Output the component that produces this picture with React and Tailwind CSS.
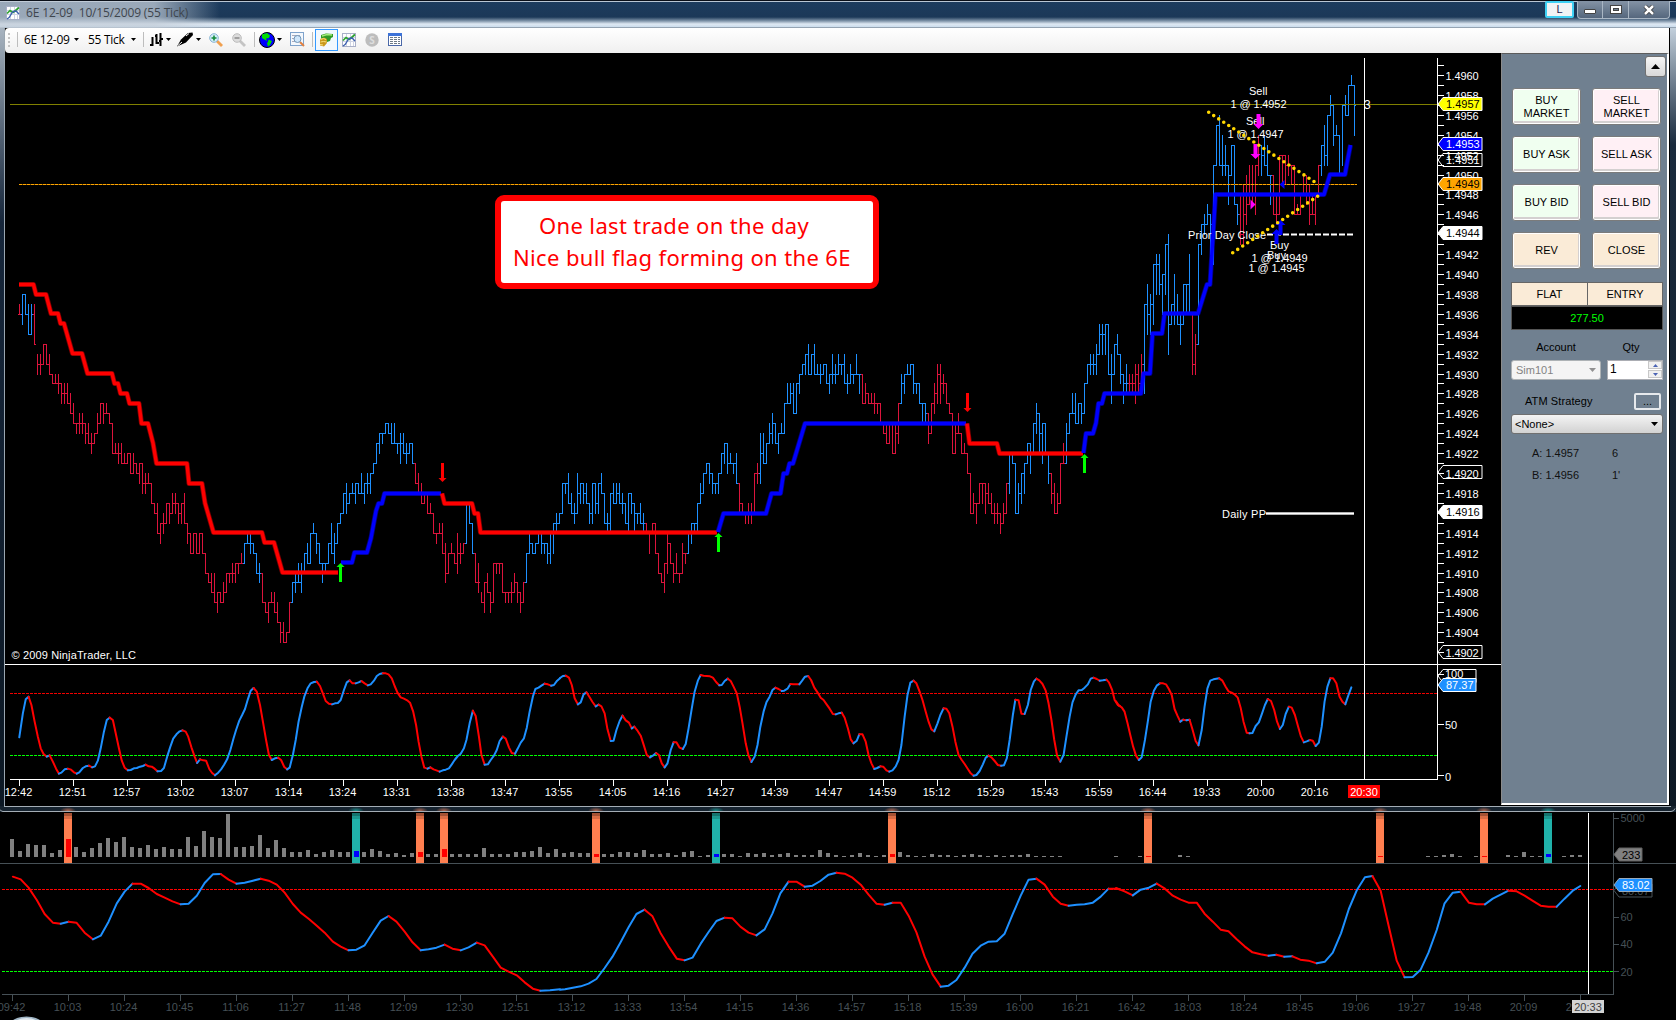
const BLUE = '#1e90ff';
const CRIMSON = '#dc143c';

// one token per bar: high, low, close in ticks above 1.4900, two digits each
const BARS = [
  ['r', '373636'],
  ['b', '383538 383636 373434 373436'],
  ['r', '373333 323031 323031 333133 333131 323030 302929 302929 302829 292728 292728 292727 282626 272525 252425 262425 262425 252324 252323 242223 242324 262425 272527 272526 272626 262525 252222 232222 232122 232121 222121 222122 222020 222021 212020 211921 211819 201819 201919 191717 171616 171414 151315 161415 171517 171516 181617 181617 171516 171517 181515 151314 141212 141214 141212 141214 141212 121010 100909 100808 100707 080608 080707 090708 100810 100910 110910 110911 111011 121111'],
  ['b', '131113 141313 141213 131212 121010 110910'],
  ['r', '100707 070606 070507 080707 080606 070505 050304 050303 040304 070407'],
  ['b', '090709 100809 110909 110810 121012 131111 141114 151414 141213 131111 110911 111011 131113 151212 141113 151315 161516 181618 191617 181718 191818 191719 191818 201818 191719 201819 201820 212021 232123 242224 242324 252425 252424 252323 252323 232223 242123 242222 232122 232223 232121'],
  ['r', '211919 201818 191717 181718 181616 171616 161414 141314 151414 151212 130910 121012 131212 121111 141012 131112 131213'],
  ['b', '171317 171515 151212'],
  ['r', '120909 110809 080707 090609 100808 080607 110711 111011 111011 110808 080708 080708 090708 100809 090708 080607 090709'],
  ['b', '120912 141213 131212 131213 141314 141213 131213 131112 141114 151215 161415 161516 191619 191819 201717 181616 171516 201618 191719 191718 191717 171516 191519 191617 191619 201818 181515 161415 181418 191717 191718 191717 181617 171515 181418 181617 171416 161516 171515 161415'],
  ['r', '151414 141214 151415 151212 121010 100909 110811 141013 131111 110910 121010 100910 131012 121112'],
  ['b', '141214 151315 151415 171417 191718 201820 212021 211920 201819 191819 201820 222022 232123 232021 222121 212021 221919'],
  ['r', '191617 171616 161516 171516 171516 201620 211920'],
  ['b', '241922 242121 232123 252324 262325 252323 242224 252424 272427 292727 292728 292626 292629 302830 313031 323032 333030 323032 333030 313030 312930 313031 312929 302830 322930 312930 323031 313031 322929 302829 312930 302930 323030 302830'],
  ['r', '302727 292728 282727 282727 282627 272627 272525 252424 252323 252325 252222 252224 272327'],
  ['b', '302729 302830 313030 313031 312829 292829 292727 272527 272526'],
  ['r', '262324 272427 292628 312730 312729 302829 292727 272626 262222 252224 262424 242222 232222 222020 201616 181617 171517 191719 191719 191618 191717 181616 171516 171516 161415 171516 191619'],
  ['b', '221822 222121 211616 191618 201720 211821 232123 232022 252225 272426 262224 252125 252222 221920'],
  ['r', '201718 191616 181617 211721 232121'],
  ['b', '252124 262426 282626 282525 272527 272526 292629 312931 323031 323031 333032 353234 353234 353235 353030 322730 333033 343232 322930 302729 312829'],
  ['r', '302829 302829 312730 312829 322831'],
  ['b', '372837 393436 383437 413541 423841 423839 403640 433843 443235 373537 403536 383535 363335 393539 393639 423636'],
  ['r', '363031 343033'],
  ['b', '433343 454245 464445 474546 464245 514151 555155 565151 545051 535051 514750 535053 534747 474546'],
  ['r', '484344 494346 504547 514749 514749 514651 545053'],
  ['b', '535052 545151 535050 504750'],
  ['r', '504646 484546 524652 524952 524951 525051 514951 514646 474646 484648 504850 504748 494546 484646 484548 514851'],
  ['b', '535053 555152 565156 585657 575354 555454 545050 575157 585656 595659 605959 595457'],
];

const priceY = (p) => Math.round(75 + (60 - p) * 9.95) + 0.5;

function barPaths() {
  const out = [];
  let x = 19;
  let prev = null;
  for (const [color, tokens] of BARS) {
    let d = '';
    for (const t of tokens.split(' ')) {
      const h = +t.slice(0, 2);
      const l = +t.slice(2, 4);
      const c = +t.slice(4, 6);
      d += `M${x + 0.5} ${priceY(h) - 0.5}V${priceY(l) + 0.5}`;
      const o = prev === null ? c : prev;
      if (o >= l && o <= h) d += `M${x - 1} ${priceY(o)}h1`;
      d += `M${x + 1} ${priceY(c)}h1`;
      prev = c;
      x += 3;
    }
    out.push({ d, color: color === 'r' ? CRIMSON : BLUE });
  }
  return out;
}

const TREND = [
  ['#ff0000', '19,284.5 33.5,284.5 36,294.5 46,294.5 51,313.5 58,313.5 60.5,323.5 64,323.5 72.5,353.5 82,353.5 87.5,373.5 112,373.5 114.5,383.5 118,383.5 120.5,393.5 127,393.5 129.5,403.5 139,403.5 141.5,423.5 148,423.5 153,443 156.5,463.5 187,463.5 189,483.5 202,483.5 205,503 213.5,532.5 262,532.5 264.5,542.5 274,542.5 282.5,572.5 338,572.5'],
  ['#0000ff', '341,562.5 352,562.5 354.5,552.5 367,552.5 371,538 376,511 378.5,503.5 382,503.5 384.5,493.5 441,493.5'],
  ['#ff0000', '442,493.5 444.5,503.5 472,503.5 474.5,513.5 478,513.5 480.5,532.5 717,532.5'],
  ['#0000ff', '718,532 723.5,513.5 766,513.5 771.5,493.5 780.5,493.5 783.5,473.5 787,473.5 789.5,463.5 793,463.5 805,423.5 966,423.5'],
  ['#ff0000', '967,423.5 969.5,443.5 997,443.5 999.5,453.5 1083,453.5'],
  ['#0000ff', '1083.5,453 1086,433.5 1093,433.5 1096,423 1098.5,403.5 1102,403.5 1104.5,393.5 1141,393.5 1143.5,373.5 1150,373.5 1152.5,333.5 1162,333.5 1164.5,313.5 1198,313.5 1207,284.5 1210,284.5 1215.5,194.5 1324,194.5 1330,174.5 1345,174.5 1348,158 1350.5,145'],
];

// oscillator samples, in chunks that start at the given x
const STOCH_TOP = [
  [0, '54,292 64,220 72,178 80,170 88,195 97,245 106,290 114,325 122,342 131,350 139,346 148,365 157,386 165,401 172,398 181,388 190,386 199,389 207,397 215,401 222,397 232,384 240,379 249,377 258,382 266,379 274,362 282,325 291,275 299,240 307,233 316,240 324,280 333,325 341,362 349,383 358,391 366,390 375,385 383,384 392,380 400,378 408,374 416,379 425,380 433,386 441,394 451,393 459,384 468,350 477,320 485,296 494,283 503,274 511,271 520,275 527,290 536,322 545,350 552,369 560,358 569,361 577,362 586,387 594,399 602,406 611,398 619,388 627,375 636,358 645,330 654,295 661,270 670,242 678,225 686,207 694,178 702,152 710,144 719,155 728,195 737,250 745,300 753,345 761,360 770,355 779,353 787,360 796,381 804,388 811,383 820,345 828,300 836,245 845,200 852,170 861,145 870,130 879,126 887,125 896,138 904,160 912,183 921,191 930,193 938,190 946,189 954,180 963,150 971,127 979,121 987,130 996,130 1004,127 1012,123 1021,130 1030,136 1038,133 1047,122 1055,108 1063,102 1072,100 1080,100 1088,103 1097,115 1105,138 1113,158 1122,172 1131,176 1140,181 1148,188 1157,215 1165,255 1172,305 1180,350 1188,383 1197,386 1205,382 1214,388 1222,391 1231,395 1240,391 1248,389 1257,385 1265,373 1273,360 1282,348 1290,341 1299,325 1306,300 1315,250 1324,212 1332,228 1341,290 1348,345 1357,374 1366,373 1374,360 1383,347 1391,330 1399,303 1408,290 1416,296 1425,322 1433,339 1442,341 1450,325 1458,308 1467,295 1475,263 1483,215 1492,170 1499,147 1508,143 1517,136 1525,131 1534,133 1543,137 1551,135 1560,122 1568,115'],
  [560, '0,114 8,108 16,107 25,113 33,135 41,175 50,193 58,187 66,163 74,157 83,172 91,186 100,199 108,194 116,199 125,220 133,268 142,303 150,302 158,270 167,243 175,227 184,241 193,248 201,265 208,260 217,272 226,287 235,317 243,345 252,352 260,347 269,339 277,345 285,370 293,382 301,370 310,330 318,307 326,307 335,323 344,327 352,312 360,265 369,205 377,155 386,122 394,105 402,107 420,109 428,113 437,126 446,136 453,135 461,123 470,116 478,123 486,140 495,160 503,200 511,250 520,310 528,347 536,366 545,350 553,315 561,260 570,215 578,187 587,170 595,150 603,143 612,147 621,153 628,152 637,146 645,132 653,133 670,133 678,122 686,110 695,108 703,120 712,143 721,157 730,173 738,180 747,194 755,206 764,222 772,223 780,220 789,218 797,233 806,265 814,298 822,310 831,302 838,283 847,283 856,305 864,345 872,370 880,387 888,384 897,379 905,380 914,391 922,395 931,391 940,379 948,360 956,315 965,230 973,165 981,128 990,122 998,130 1007,155 1015,180 1024,215 1032,245 1040,268 1048,274 1057,250 1065,225 1074,205 1082,206 1090,220 1099,260 1107,305 1116,345 1125,360 1133,372 1142,387 1150,400 1158,407 1166,405 1175,393 1184,373 1192,353 1200,347 1208,352 1217,363 1226,375 1235,377 1243,376 1251,355 1259,300 1268,225 1275,179 1284,181 1292,221 1301,222 1310,195 1318,150 1327,124 1334,116 1342,121 1351,132 1360,152 1368,190 1376,240 1384,300 1392,348 1401,365 1410,345 1418,290 1427,230 1435,187 1444,163 1452,151 1461,150 1469,143 1478,133 1486,116 1494,113 1503,117 1511,122 1520,121 1530,119 1537,127 1546,150 1553,180 1562,195 1568,198'],
  [1116, '0,184 8,197 16,202 24,215 32,248 40,285 48,320 56,347 64,360 72,352 81,300 89,245 97,185 106,152 114,137 123,130 132,130 140,133 148,147 156,165 164,207 172,227 180,245 188,239 197,241 206,239 214,268 223,303 231,316 240,270 248,200 256,145 264,122 273,118 289,115 298,122 307,140 315,154 324,158 332,163 341,173 349,203 357,245 366,278 374,280 382,279 391,258 400,247 409,220 417,195 425,177 434,183 443,210 451,245 459,267 467,255 475,222 484,200 492,203 501,225 510,260 518,290 526,307 534,304 543,300 551,302 559,318 568,308 576,260 584,185 592,140 600,115 608,115 617,130 626,170 634,185 642,193 651,165 659,142'],
];

const STOCH_BOTTOM = [
  [0, '36,710 58,718 80,743 103,780 125,822 148,848 170,851 192,845 214,848 237,878 260,898 282,887 304,845 327,790 349,755 371,731 394,731 416,744 439,762 461,773 483,784 506,793 528,791 551,767 573,729 596,703 618,702 640,719 662,731 685,728 708,722 730,716 752,722 775,734 797,758 820,792 842,818 865,837 887,857 909,878 932,905 954,920 976,931 998,929 1021,916 1043,879 1066,842 1088,828 1110,845 1133,875 1155,907 1178,931 1200,928 1222,923 1245,914 1267,926 1290,931 1312,922 1335,908 1357,916 1380,950 1402,983 1424,995 1447,1006 1469,1027 1492,1046 1513,1052 1540,1051 1568,1048'],
  [560, '0,1049 14,1048 36,1043 58,1039 80,1031 102,1017 125,984 147,950 170,906 192,862 214,822 237,809 259,829 281,878 304,919 327,956 349,961 371,953 394,911 416,876 438,843 461,833 483,835 505,860 528,878 550,886 573,868 595,820 617,760 640,725 662,725 685,740 707,737 729,723 752,704 774,698 797,701 819,713 842,734 864,764 886,791 909,794 931,788 954,788 976,827 998,877 1021,950 1043,1003 1066,1040 1088,1037 1110,1020 1133,983 1155,941 1178,917 1200,905 1223,904 1245,881 1267,824 1290,767 1312,719 1334,716 1357,734 1380,770 1402,791 1424,797 1447,794 1469,793 1492,788 1514,770 1536,746 1558,746 1568,748'],
  [1116, '0,744 24,754 47,766 69,749 92,743 114,731 137,746 159,767 181,779 203,788 226,788 248,821 271,845 293,869 315,874 338,898 360,919 382,937 405,943 427,947 449,944 471,950 494,949 516,959 539,962 562,970 585,965 607,938 630,880 652,807 675,749 697,712 718,708 741,752 764,860 786,962 808,1012 831,1011 853,989 875,938 898,870 920,790 943,758 965,755 988,788 1010,793 1033,793 1055,776 1077,764 1099,752 1122,754 1144,767 1166,782 1189,797 1211,800 1234,800 1256,776 1279,752 1300,738'],
];

// split an oscillator into runs: blue while rising, red otherwise
function runs(chunks) {
  const out = [];
  for (const [x0, s] of chunks) {
    const pts = s.split(' ').map((p) => {
      const [x, y] = p.split(',').map(Number);
      return [x0 + x / 2.8, 640 + y / 3];
    });
    for (let i = 1; i < pts.length; i++) {
      const color = pts[i][1] < pts[i - 1][1] ? BLUE : '#ff0000';
      const last = out[out.length - 1];
      if (last && last.color === color && last.x0 === x0) {
        last.points.push(pts[i]);
      } else {
        out.push({ color, x0, points: [pts[i - 1], pts[i]] });
      }
    }
  }
  return out;
}

const VOLUME = [
  18, 6, 13, 12, 12, 4, 7, 18, 10, 5, 9, 14, 19, 15, 20, 10, 9, 12, 8, 10, 8, 8, 20, 11, 26, 20, 19, 43, 10, 10, 11, 22,
  9, 17, 9, 5, 5, 7, 3, 5, 7, 5, 5, 6, 5, 8, 6, 3, 4, 2, 4, 5, 3, 3, 8, 3, 3, 3, 3, 9, 3, 3, 3, 5, 5, 6, 10, 4, 8,
  4, 5, 4, 4, 3, 3, 3, 5, 5, 4, 7, 3, 3, 4, 2, 5, 6, 1, 2, 3, 3, 3, 1, 4, 3, 4, 2, 3, 4, 2, 2, 2, 7, 4, 2, 1, 2, 4,
  2, 1, 2, 3, 5, 2, 1, 1, 3, 2, 2, 1, 2, 3, 2, 1, 2, 1, 2, 2, 3, 1, 1, 1, 1,
];
const VOLUME_LATE = {
  138: 1, 141: 1, 142: 1, 146: 2, 147: 1, 171: 1, 177: 1, 178: 1, 179: 2, 180: 3, 181: 1, 183: 1, 184: 1, 187: 2,
  188: 1, 189: 5, 190: 1, 191: 1, 192: 3, 194: 1, 195: 2, 196: 2,
};
const SIGNALS = { 7: 'sell', 43: 'buy', 51: 'sell', 54: 'sell', 73: 'sell', 88: 'buy', 110: 'sell', 142: 'sell', 171: 'sell', 184: 'sell', 192: 'buy' };

const TOP_TIMES = '12:42 12:51 12:57 13:02 13:07 13:14 13:24 13:31 13:38 13:47 13:55 14:05 14:16 14:27 14:39 14:47 14:59 15:12 15:29 15:43 15:59 16:44 19:33 20:00 20:16'.split(' ');
const BOTTOM_TIMES = '09:42 10:03 10:24 10:45 11:06 11:27 11:48 12:09 12:30 12:51 13:12 13:33 13:54 14:15 14:36 14:57 15:18 15:39 16:00 16:21 16:42 18:03 18:24 18:45 19:06 19:27 19:48 20:09 20:30'.split(' ');

function Oscillator({ data }) {
  return runs(data).map((r, i) => (
    <polyline
      key={i}
      points={r.points.map((p) => p.join(',')).join(' ')}
      fill="none"
      stroke={r.color}
      strokeWidth="2"
      strokeLinecap="round"
      strokeLinejoin="round"
    />
  ));
}

function Tag({ x, y, w = 39, fill, text, label, stroke = '#fff', h = 13 }) {
  return (
    <g>
      <path
        d={`M${x} ${y}l5 ${-h / 2}h${w}v${h}h${-w}z`}
        fill={fill}
        stroke={stroke}
        strokeWidth="1"
      />
      <text x={x + 8} y={y + 4} fill={text}>
        {label}
      </text>
    </g>
  );
}

function Arrow({ x, y, up, color, len = 19, w = 3, head = 4 }) {
  const s = up ? 1 : -1;
  const wing = head - w / 2;
  const shaft = (len - head) * s;
  return (
    <path
      d={`M${x} ${y}l${head} ${head * s}h${-wing}v${shaft}h${-w}v${-shaft}h${-wing}z`}
      fill={color}
    />
  );
}

function MainChart() {
  const ticks = [];
  for (let p = 2; p <= 61; p++) ticks.push(p);
  const labels = ticks.filter((p) => p % 2 === 0);

  return (
    <svg
      className="block [font-family:'Liberation_Sans',Arial,sans-serif] text-[11px]"
      width="1496"
      height="752"
      viewBox="5 53 1496 752"
    >
      <rect x="5" y="53" width="1496" height="752" fill="#000" />

      <g shapeRendering="crispEdges">
        {barPaths().map((b, i) => (
          <path key={i} d={b.d} stroke={b.color} fill="none" />
        ))}
        <path d="M10 104.5H1437" stroke="#808000" />
        <path d="M19 184.5H1357" stroke="#7a4f00" />
        <path d="M19 184.5H1357" stroke="#ffa500" strokeDasharray="3 1" />
      </g>

      {TREND.map(([color, points], i) => (
        <g key={i} fill="none" stroke={color} strokeLinejoin="round">
          <polyline points={points} strokeWidth="5" strokeOpacity="0.5" />
          <polyline points={points} strokeWidth="3.4" />
        </g>
      ))}

      <Arrow x={340.5} y={563} up color="#00ff00" />
      <Arrow x={718.5} y={533} up color="#00ff00" />
      <Arrow x={1084.5} y={454} up color="#00ff00" />
      <Arrow x={442.5} y={482} color="#ff0000" />
      <Arrow x={967.5} y={412} color="#ff0000" />

      {/* prior close and pivot */}
      <g fill="#fff">
        <text x="1188" y="239" textLength="78">Prior Day Close</text>
        <text x="1222" y="517.5" textLength="44">Daily PP</text>
      </g>
      <path d="M1267 234.5H1354" stroke="#fff" strokeWidth="2" strokeDasharray="6 2" />
      <path d="M1266 513.5H1354" stroke="#999" strokeWidth="3" />
      <path d="M1266 513.5H1354" stroke="#fff" strokeWidth="1.4" />

      {/* trades */}
      <g fill="#fff">
        <text x="1249" y="95">Sell</text>
        <text x="1230.5" y="108" textLength="56">1 @ 1.4952</text>
        <text x="1246" y="125">Sell</text>
        <text x="1227.5" y="138" textLength="56">1 @ 1.4947</text>
        <text x="1270" y="249">Buy</text>
        <text x="1267" y="259">Buy</text>
        <text x="1251.5" y="262" textLength="56">1 @ 1.4949</text>
        <text x="1248.5" y="272" textLength="56">1 @ 1.4945</text>
      </g>
      <Arrow x={1258.5} y={129} color="#ff00ff" len={15} w={4} head={5} />
      <Arrow x={1255.5} y={159} color="#ff00ff" len={15} w={4} head={5} />
      <path d="M1250.5 199.5l5 5-5 5z" fill="#ff00ff" />
      <Arrow x={1280.5} y={220} up color="#0000ff" len={15} w={4} head={5} />
      <Arrow x={1276.5} y={229} up color="#0000ff" len={15} w={4} head={5} />
      <path d="M1284.5 180l-5 4.500 5 4.500z" fill="#0000ff" />
      <g stroke="#ffd700" strokeWidth="3.6" strokeLinecap="round" strokeDasharray="0 6">
        <path d="M1208.700 112.300L1315.500 182.500" />
        <path d="M1232.700 252.700L1318.500 195.700" />
      </g>

      {/* oscillator pane */}
      <path d="M10 693.5H1437" stroke="#f00000" strokeDasharray="3 1" />
      <path d="M10 755.5H1437" stroke="#00ff00" strokeDasharray="3 1" />
      <Oscillator data={STOCH_TOP} />

      <g stroke="#fff" fill="none" shapeRendering="crispEdges">
        <path d="M5 664.5H1501M10 779.5H1437.500M1364.500 58V779M1437.500 58V779.500" />
        {ticks.map((p) => (
          <path key={p} d={`M1438 ${priceY(p)}h6`} />
        ))}
        <path d="M1438 674.500h6M1438 724.500h6M1438 775.500h6" />
        {TOP_TIMES.map((t, i) => (
          <path key={t} d={`M${19.5 + i * 54} 780v6`} />
        ))}
      </g>

      <g fill="#fff">
        {labels.map((p) => (
          <text key={p} x="1445.500" y={priceY(p) + 4} textLength="33">
            {`1.49${String(p).padStart(2, '0')}`}
          </text>
        ))}
        <text x="1445" y="678">100</text>
        <text x="1445" y="728.500">50</text>
        <text x="1445" y="780.500">0</text>
        {TOP_TIMES.map((t, i) => (
          <text key={t} x={18.5 + i * 54} y="796" textAnchor="middle">
            {t}
          </text>
        ))}
        <text x="1364" y="108.500" fontSize="12">3</text>
        <text x="11.500" y="658.500" textLength="124.500">© 2009 NinjaTrader, LLC</text>
      </g>

      <Tag x={1438} y={160} fill="none" text="#fff" label="1.4951" />
      <Tag x={1438} y={104} fill="#ffff00" text="#000" label="1.4957" />
      <Tag x={1438} y={144} fill="#0000ff" text="#fff" label="1.4953" />
      <Tag x={1438} y={184} fill="#ffa500" text="#000" label="1.4949" />
      <Tag x={1438} y={233} fill="#fff" text="#000" label="1.4944" />
      <Tag x={1438} y={472} fill="none" text="none" label="" />
      <Tag x={1438} y={512} fill="#fff" text="#000" label="1.4916" />
      <Tag x={1438} y={652} fill="none" text="none" label="" />
      <Tag x={1438} y={676} w={33} fill="none" text="none" label="" />
      <Tag x={1438} y={685} w={33} fill={BLUE} text="#fff" label="87.37" />

      <rect x="1348" y="785" width="32" height="13" fill="#ff0000" />
      <text x="1364" y="796" textAnchor="middle" fill="#fff">20:30</text>
    </svg>
  );
}

function BackgroundChart() {
  const bars = VOLUME.map((h, k) => [k, h]).concat(Object.entries(VOLUME_LATE).map(([k, h]) => [+k, h]));

  return (
    <svg
      className="block [font-family:'Liberation_Sans',Arial,sans-serif] text-[11px]"
      width="1676"
      height="207"
      viewBox="0 813 1676 207"
    >
      <rect x="0" y="813" width="1676" height="207" fill="#000" />

      {Object.entries(SIGNALS).map(([k, side]) => (
        <g key={k} fill={side === 'buy' ? '#20b2aa' : '#ff7f50'}>
          <rect x={8 + 8 * k} y="813" width="8" height="50" />
          <rect x={8 + 8 * k} y="813" width="8" height="3" fill="#000" opacity="0.35" />
          <rect x={8 + 8 * k} y="816" width="8" height="3" fill="#000" opacity="0.15" />
        </g>
      ))}
      {bars.map(([k, h]) => (
        <rect
          key={k}
          x={10 + 8 * k}
          y={857 - h}
          width={SIGNALS[k] ? 5 : 4}
          height={h}
          fill={SIGNALS[k] === 'buy' ? '#0000ff' : SIGNALS[k] ? '#ff0000' : '#808080'}
        />
      ))}

      <path d="M2 889.500H1614" stroke="#ff0000" strokeDasharray="3 1" />
      <path d="M2 971.500H1614" stroke="#00ff00" strokeDasharray="3 1" />
      <g stroke="#465056" fill="none" shapeRendering="crispEdges">
        <path d="M0 863.500H1676M2 994.500H1613.500V813M1614 818.500h5M1614 917.500h5M1614 944.500h5M1614 971.500h5" />
        {BOTTOM_TIMES.map((t, i) => (
          <path key={t} d={`M${12.5 + i * 56} 995v6`} />
        ))}
      </g>
      <Oscillator data={STOCH_BOTTOM} />
      <path d="M1588.500 813V994" stroke="#fff" shapeRendering="crispEdges" />

      <g fill="#465056">
        {BOTTOM_TIMES.map((t, i) => (
          <text key={t} x={11.5 + i * 56} y="1011" textAnchor="middle">
            {t}
          </text>
        ))}
        <text x="1620.500" y="821.500">5000</text>
        <text x="1620.500" y="921">60</text>
        <text x="1620.500" y="948">40</text>
        <text x="1620.500" y="975.500">20</text>
      </g>
      <Tag x={1614} y={854.5} w={23} fill="#808080" stroke="#606060" text="#000" label="233" />
      <Tag x={1614} y={890.5} w={33} fill="#000" stroke="#465056" text="#465056" label="80.07" />
      <Tag x={1614} y={885} w={33} fill={BLUE} stroke="#9ab" text="#fff" label="83.02" />
      <rect x="1572" y="1000" width="32" height="13" fill="#d3d3d3" />
      <text x="1588" y="1011" textAnchor="middle" fill="#404040">20:33</text>
      <ellipse cx="26.500" cy="1026" rx="17" ry="9.500" fill="#9fb4c4" />
      <ellipse cx="26.500" cy="1026" rx="14" ry="8" fill="#dfe8ee" />
    </svg>
  );
}

// bottom border of the window, with the signal stripes showing through the glass
function GlassEdge() {
  return (
    <svg className="block" width="1676" height="7" viewBox="0 806 1676 7">
      <defs>
        <radialGradient id="sellGlow">
          <stop offset="0" stopColor="#e08060" stopOpacity="0.8" />
          <stop offset="1" stopColor="#e08060" stopOpacity="0" />
        </radialGradient>
        <radialGradient id="buyGlow">
          <stop offset="0" stopColor="#20b2aa" stopOpacity="0.8" />
          <stop offset="1" stopColor="#20b2aa" stopOpacity="0" />
        </radialGradient>
      </defs>
      <rect x="0" y="806" width="1676" height="7" fill="#16232f" />
      {Object.entries(SIGNALS).map(([k, side]) => (
        <ellipse
          key={k}
          cx={12 + 8 * k}
          cy="811"
          rx="8"
          ry="4"
          fill={side === 'buy' ? 'url(#buyGlow)' : 'url(#sellGlow)'}
        />
      ))}
      <path d="M4 806.500H1671" stroke="#a4adb5" />
      <path d="M0 809.500q1 2 3 2H1671q3 0 4-3" fill="none" stroke="#a4adb5" />
      <path d="M0 812.500H1676" stroke="#000" />
    </svg>
  );
}

function ChartGlyph() {
  return (
    <svg className="block shrink-0" width="14" height="14" viewBox="0 0 14 14">
      <rect x="0.500" y="0.500" width="13" height="13" fill="#fff" stroke="#a9b0c8" />
      <path d="M4.500 1v12M8.500 1v12M1 4.500h12M1 8.500h12M11.500 1v12" stroke="#cfd4e4" />
      <path d="M1 7.500L4 4.500l3 2L9 5l4-3.500" fill="none" stroke="#2fa52f" strokeWidth="1.700" />
      <path d="M1 13c2-1 3-2 4-4.500s3-3.500 5-3.500l3 3" fill="none" stroke="#3a5fae" strokeWidth="1.300" />
    </svg>
  );
}

function Magnifier({ lens, rim, handle, sign, plus }) {
  return (
    <svg className="block shrink-0" width="14" height="14" viewBox="0 0 14 14">
      <path d="M8 8l5 5" stroke={handle} strokeWidth="2.800" />
      <circle cx="5" cy="5" r="4.300" fill={lens} stroke={rim} />
      <path d={plus ? 'M2.500 5h5M5 2.500v5' : 'M2.500 5h5'} stroke={sign} strokeWidth="1.600" />
    </svg>
  );
}

function Caret({ className }) {
  return (
    <svg className={`block shrink-0 ${className}`} width="5" height="3" viewBox="0 0 5 3">
      <path d="M0 0h5L2.500 3z" fill="#000" />
    </svg>
  );
}

function Toolbar() {
  return (
    <div className="flex h-[25px] items-center rounded-l-sm bg-linear-to-b from-white to-[#f0f0f0] pb-[2px] [font-family:'Open_Sans',sans-serif] text-[12px] text-black">
      <div className="ml-[3px] h-[14px] w-[2px] bg-[repeating-linear-gradient(to_bottom,#c4c4c4_0_2px,transparent_2px_4px)]" />
      <div className="ml-[7px] h-[15px] w-px bg-[#bdbdbd]" />
      <span className="ml-[6px] w-[46px] whitespace-pre tracking-[-0.3px]">6E 12-09</span>
      <Caret className="ml-[4px]" />
      <span className="ml-[9px] w-[40px] whitespace-pre tracking-[-0.3px]">55 Tick</span>
      <Caret className="ml-[3px]" />
      <div className="ml-[7px] h-[15px] w-px bg-[#bdbdbd]" />
      <svg className="ml-[6px] block shrink-0" width="13" height="14" viewBox="0 0 13 14">
        <path d="M2.500 4v9M0 12h2M6.500 1v10M5 3h2M7 10h2M10.500 0v13M9 8h1M11 6h2" stroke="#000" strokeWidth="2" />
      </svg>
      <Caret className="ml-[3px]" />
      <svg className="ml-[6px] block shrink-0" width="17" height="15" viewBox="0 0 17 15">
        <path d="M0 14.500l4-7L11 1l4.500-.5.5 2.500-7 7.500z" fill="#000" />
        <path d="M1 13.500l4-3.500M9 4l3-2.500" stroke="#fff" strokeWidth="1" />
      </svg>
      <Caret className="ml-[2px]" />
      <div className="ml-[8px]">
        <Magnifier lens="#d4ecfa" rim="#86b4d4" handle="#f0a050" sign="#128a3a" plus />
      </div>
      <div className="ml-[9px]">
        <Magnifier lens="#dcdcdc" rim="#bcbcbc" handle="#c4c4c4" sign="#909090" />
      </div>
      <div className="ml-[8px] h-[15px] w-px bg-[#bdbdbd]" />
      <svg className="ml-[4px] block shrink-0" width="16" height="16" viewBox="0 0 16 16">
        <circle cx="8" cy="8" r="7.500" fill="#0000ff" stroke="#000" />
        <path d="M3 2.500L8 1l3 2.500-1 2.500-3 .5L8 9 5.500 7.500 3 6zM9.500 7.500L13 9l-2 4-2 1.500-1-3 1-2z" fill="#00e000" />
      </svg>
      <Caret className="ml-[2px]" />
      <svg className="ml-[8px] block shrink-0" width="15" height="15" viewBox="0 0 15 15">
        <rect x="0.500" y="0.500" width="13" height="13" fill="#f4f8fd" stroke="#7fa3cc" />
        <path d="M2 3.500h8M2 6.500h8M2 9.500h8" stroke="#aab" />
        <path d="M10 10l4 4" stroke="#e08040" strokeWidth="2" />
        <circle cx="7.500" cy="7" r="3.500" fill="#cfe6fa" stroke="#6f95b8" />
      </svg>
      <div className="ml-[7px] h-[15px] w-px bg-[#bdbdbd]" />
      <div className="ml-[2px] flex h-[22px] w-[23px] items-center justify-center border border-[#3399ff] bg-[#f2f8fe]">
        <svg className="block" width="15" height="14" viewBox="0 0 15 14">
          <path d="M2 2l5-1.500 7 .5v3l-2 1-1 3-3 1-1-3-5-.5z" fill="#2f9a26" />
          <path d="M3 3l5-1.500 5 .5" stroke="#a5ea7a" strokeWidth="1.400" fill="none" />
          <path d="M1 6l4-1.500 3 1.500v4l-3 3.500-4-1z" fill="#c9971c" />
          <path d="M1.500 6.500l3-1 2.500 1M1.500 9l3-.5 3 .5M1 11.500l3 .5" stroke="#f8e27a" fill="none" />
        </svg>
      </div>
      <div className="ml-[4px]">
        <ChartGlyph />
      </div>
      <svg className="ml-[9px] block shrink-0" width="14" height="14" viewBox="0 0 14 14">
        <circle cx="7" cy="7" r="6.700" fill="#bdbdbd" />
        <text x="7" y="10.500" textAnchor="middle" fontSize="10" fontWeight="bold" fill="#dedede">S</text>
      </svg>
      <svg className="ml-[9px] block shrink-0" width="14" height="13" viewBox="0 0 14 13">
        <rect x="0.500" y="0.500" width="13" height="12" fill="#fff" stroke="#4a68a8" />
        <rect x="0" y="0" width="14" height="3" fill="#3d73d8" />
        <g stroke="#6d7a86" shapeRendering="crispEdges">
          <path d="M2 4.500h3M2 6.500h3M2 8.500h3M2 10.500h3M6 4.500h3M6 6.500h3M6 8.500h3M6 10.500h3M10 4.500h2M10 6.500h2M10 8.500h2M10 10.500h2" />
        </g>
      </svg>
    </div>
  );
}

function TitleBar() {
  return (
    <div className="relative flex h-[28px] items-start border-t border-[#0a0f18] bg-[linear-gradient(to_bottom,#b9c6d4_0_1px,#1d3c5e_1px,#1b3858_16px,#8296ab_20px,#dfe9f3_23px,#cbdcec_26px,#5f6c7a_27px)]">
      <div className="absolute inset-y-0 left-0 w-[220px] bg-linear-to-r from-[#c3cdd8] from-70% to-transparent opacity-75" />
      <div className="relative mt-[5px] ml-[6px] flex items-center gap-[6px]">
        <ChartGlyph />
        <span className="w-[163px] whitespace-pre [font-family:'Open_Sans',sans-serif] text-[12px] leading-[14px] tracking-[-0.15px] text-[#3f464e]">
          6E 12-09  10/15/2009 (55 Tick)
        </span>
      </div>
      <div className="relative ml-auto flex items-start">
        <div className="mr-[3px] flex h-[17px] w-[29px] items-center justify-center rounded-[2px] border-2 border-[#3fd0f4] bg-[#f1f3f5] [font-family:'Liberation_Sans',sans-serif] text-[11px] text-[#1a1a50]">
          L
        </div>
        <div className="mr-[6px] flex h-[18px] w-[93px] rounded-b-[4px] border border-t-0 border-[#a9b6c4] bg-linear-to-b from-[#8493a5] to-[#55677d]">
          <div className="flex w-[25px] items-center justify-center border-r border-[#a9b6c4]">
            <div className="mt-[3px] h-[5px] w-[12px] rounded-[1px] border border-[#444] bg-white" />
          </div>
          <div className="flex w-[26px] items-center justify-center border-r border-[#a9b6c4]">
            <div className="h-[9px] w-[12px] border border-[#444] bg-white p-[2px]">
              <div className="h-[3px] border border-[#444] bg-[#708090]" />
            </div>
          </div>
          <div className="flex flex-1 items-center justify-center">
            <svg className="block" width="12" height="10" viewBox="0 0 12 10">
              <path d="M2 1l8 8M10 1L2 9" stroke="#333" strokeWidth="4" />
              <path d="M2 1l8 8M10 1L2 9" stroke="#fff" strokeWidth="2.500" />
            </svg>
          </div>
        </div>
      </div>
    </div>
  );
}

function OrderButton({ color, children }) {
  return (
    <button
      className={`flex h-[37px] w-[69px] items-center justify-center rounded-[3px] border border-[#7b7b7b] text-center leading-[13px] whitespace-pre-line shadow-[inset_0_0_0_1px_#fff,inset_-1px_-2px_0_1px_#d4d0d0] ${color}`}
    >
      {children}
    </button>
  );
}

function OrderPanel() {
  return (
    <div className="flex h-[752px] w-[168px] flex-col border-t border-r-2 border-b-2 border-l border-t-[#5c5c5c] border-r-white border-b-white border-l-[#8c8c8c] bg-[#708090] [font-family:'Liberation_Sans',Arial,sans-serif] text-[11px] text-black">
      <div className="mt-[2px] mr-px flex size-[21px] items-center justify-center self-end rounded-[3px] border border-[#707070] bg-linear-to-b from-[#f6f6f6] to-[#d8d8d8]">
        <svg className="block" width="9" height="5" viewBox="0 0 9 5">
          <path d="M0 5h9L4.500 0z" fill="#000" />
        </svg>
      </div>

      <div className="mt-[11px] ml-[10px] grid w-[149px] grid-cols-[69px_69px] gap-x-[11px] gap-y-[11px]">
        <OrderButton color="bg-[#f0fff0]">{'BUY\nMARKET'}</OrderButton>
        <OrderButton color="bg-[#fff0f5]">{'SELL\nMARKET'}</OrderButton>
        <OrderButton color="bg-[#f0fff0]">BUY ASK</OrderButton>
        <OrderButton color="bg-[#fff0f5]">SELL ASK</OrderButton>
        <OrderButton color="bg-[#f0fff0]">BUY BID</OrderButton>
        <OrderButton color="bg-[#fff0f5]">SELL BID</OrderButton>
        <OrderButton color="bg-[#faebd7]">REV</OrderButton>
        <OrderButton color="bg-[#faebd7]">CLOSE</OrderButton>
      </div>

      <div className="mt-[13px] ml-[9px] w-[152px]">
        <div className="flex h-[24px] border border-[#666] bg-[#faebd7]">
          <div className="flex w-[76px] items-center justify-center border-r border-[#666]">FLAT</div>
          <div className="flex flex-1 items-center justify-center">ENTRY</div>
        </div>
        <div className="flex h-[24px] items-center justify-center border border-[#555] bg-black text-[#00ff00]">277.50</div>

        <div className="mt-[11px] flex leading-[13px]">
          <span className="w-[90px] text-center">Account</span>
          <span className="ml-[6px] w-[48px] text-center">Qty</span>
        </div>

        <div className="mt-[6px] flex h-[20px] justify-between">
          <div className="flex w-[90px] items-center justify-between rounded-[3px] border border-[#adb2b5] bg-[#f4f4f4] px-[4px] text-[#838383]">
            Sim101
            <svg className="block" width="7" height="4" viewBox="0 0 7 4">
              <path d="M0 0h7L3.500 4z" fill="#919191" />
            </svg>
          </div>
          <div className="flex w-[56px] justify-between border border-[#abadb3] bg-white pl-[2px]">
            <span className="text-[12px] leading-[16px]">1</span>
            <div className="flex w-[14px] flex-col gap-px">
              <div className="flex h-[8px] items-center justify-center border border-[#c8c8c8] bg-[#f0f0f0]">
                <svg className="block" width="5" height="3" viewBox="0 0 5 3">
                  <path d="M0 3h5L2.500 0z" fill="#4a63b4" />
                </svg>
              </div>
              <div className="flex h-[8px] items-center justify-center border border-[#c8c8c8] bg-[#f0f0f0]">
                <svg className="block" width="5" height="3" viewBox="0 0 5 3">
                  <path d="M0 0h5L2.500 3z" fill="#4a63b4" />
                </svg>
              </div>
            </div>
          </div>
        </div>

        <div className="mt-[13px] flex h-[17px] items-center">
          <span className="ml-[14px] w-[70px] tracking-[0.1px]">ATM Strategy</span>
          <div className="ml-[39px] flex h-[17px] w-[27px] items-center justify-center rounded-[2px] border-2 border-[#e6e9ec] pb-[1px] leading-none">
            ...
          </div>
        </div>

        <div className="mt-[4px] flex h-[20px] items-center justify-between rounded-[3px] border border-[#707070] bg-linear-to-b from-[#f4f4f4] to-[#d2d2d2] pr-[4px] pl-[3px]">
          {'<None>'}
          <svg className="block" width="7" height="4" viewBox="0 0 7 4">
            <path d="M0 0h7L3.500 4z" fill="#000" />
          </svg>
        </div>

        <div className="mt-[13px] flex leading-[13px] text-[#111]">
          <span className="ml-[21px] w-[80px]">A: 1.4957</span>
          <span>6</span>
        </div>
        <div className="mt-[9px] flex leading-[13px] text-[#111]">
          <span className="ml-[21px] w-[80px]">B: 1.4956</span>
          <span>1&#x27;</span>
        </div>
      </div>
    </div>
  );
}

function Callout() {
  return (
    <div className="absolute top-[142px] left-[490px] h-[94px] w-[384px] rounded-[9px] border-6 border-[#ff0000] bg-white pt-[8px] pl-[12px] [font-family:'Noto_Sans',sans-serif] text-[22px] leading-[32px] tracking-[0.36px] whitespace-nowrap text-[#ff0000]">
      <div className="pl-[26px]">One last trade on the day</div>
      <div>Nice bull flag forming on the 6E</div>
    </div>
  );
}

export default function App() {
  return (
    <div className="flex h-[1020px] w-[1676px] flex-col overflow-hidden bg-black">
      <div className="flex h-[813px] flex-col">
        <TitleBar />
        <div className="flex">
          <div className="h-[778px] w-[5px] border-r border-[#9aa6b0] bg-linear-to-b from-[#a8b4c0] via-[#16263a] via-25% to-[#0c1824]" />
          <div className="w-[1664px]">
            <Toolbar />
            <div className="relative flex">
              <MainChart />
              <OrderPanel />
              <Callout />
            </div>
          </div>
          <div className="h-[778px] flex-1 border-l border-black bg-linear-to-b from-[#c3d0dc] via-[#1a2b3d] via-15% to-[#0c1824]" />
        </div>
        <GlassEdge />
      </div>
      <BackgroundChart />
    </div>
  );
}
